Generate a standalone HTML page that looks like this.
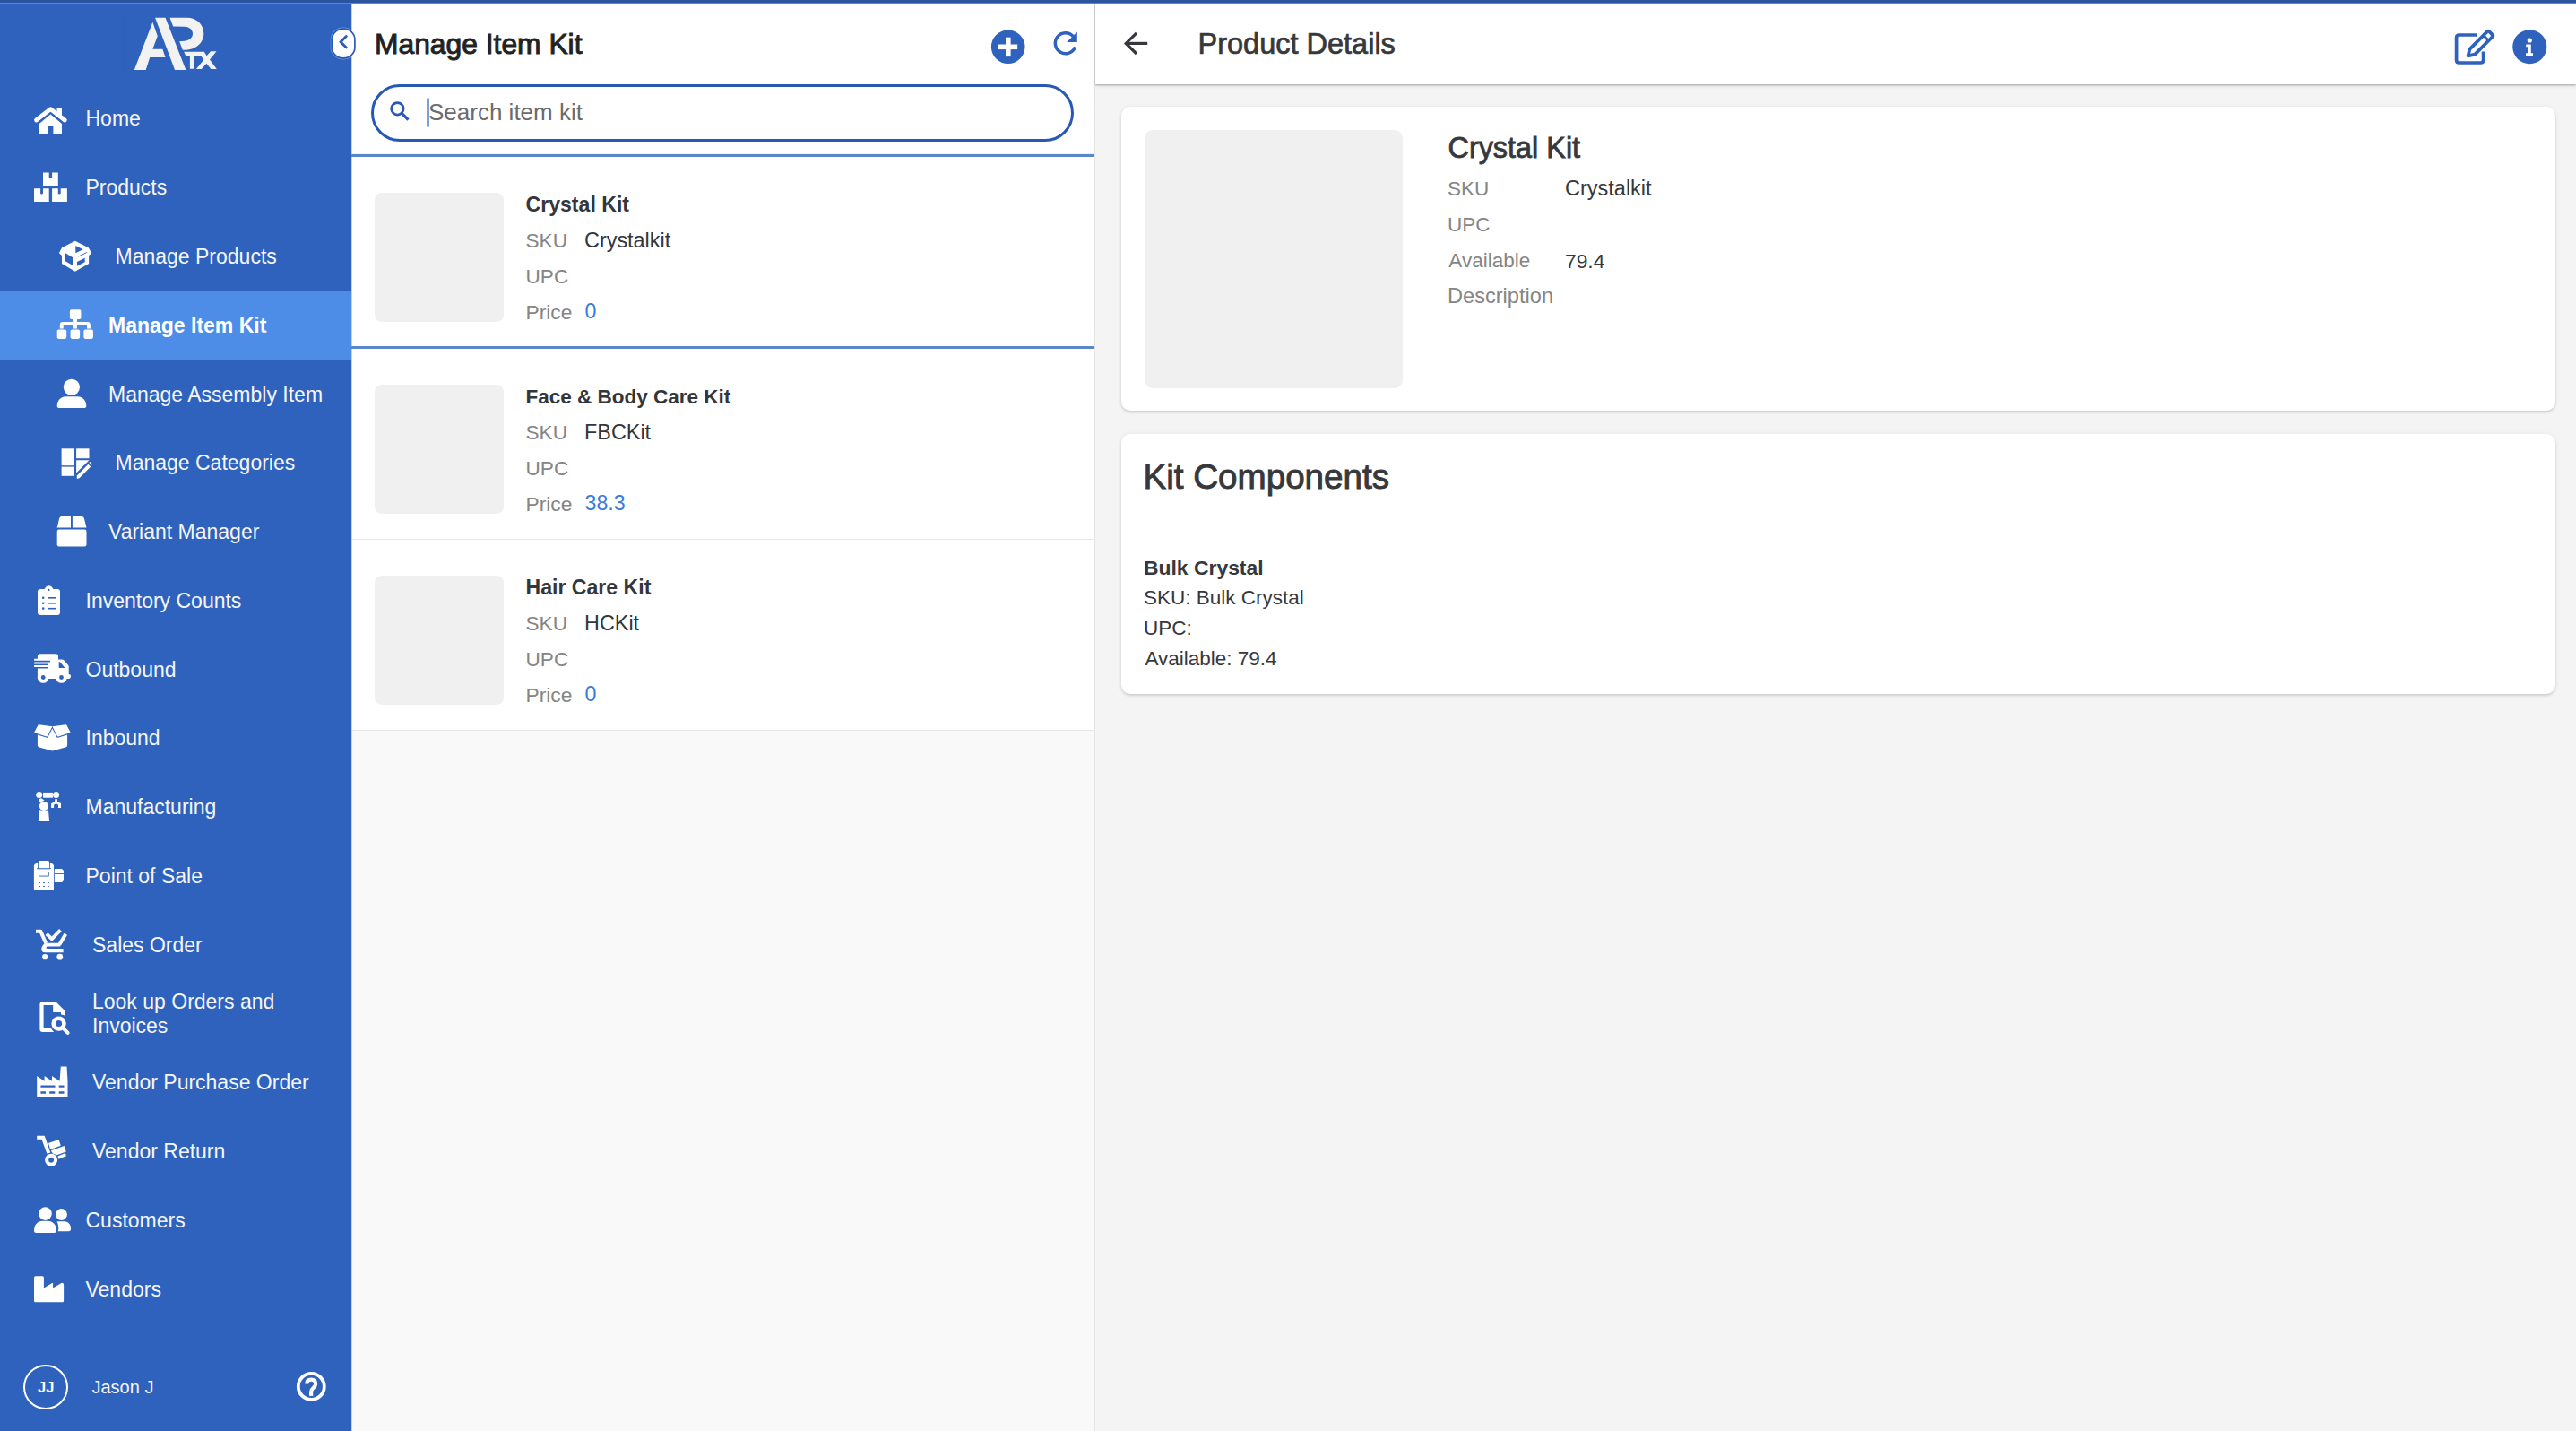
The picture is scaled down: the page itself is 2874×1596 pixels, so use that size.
<!DOCTYPE html>
<html><head><meta charset="utf-8">
<style>
html,body{margin:0;padding:0;width:2874px;height:1596px;overflow:hidden;background:#f4f4f4;}
body{position:relative;font-family:"Liberation Sans",sans-serif;}
.t{position:absolute;white-space:nowrap;}
</style></head><body>
<div style="position:absolute;left:392px;top:4px;width:830px;height:1592px;background:#f9f9f9;"></div>
<div style="position:absolute;left:392px;top:4px;width:830px;height:168px;background:#ffffff;"></div>
<div style="position:absolute;left:1222px;top:4px;width:1652px;height:1592px;background:#f4f4f4;"></div>
<div style="position:absolute;left:0px;top:0px;width:392px;height:1596px;background:#2f62bd;"></div>
<div style="position:absolute;left:0px;top:324px;width:392px;height:77px;background:#4d8de8;"></div>
<div style="position:absolute;left:1221px;top:4px;width:1px;height:1592px;background:#e5e5e5;"></div>
<div class="t" style="left:95.5px;top:120.6px;font-size:23px;line-height:23px;color:#f5f5f5;font-weight:400;">Home</div>
<div class="t" style="left:95.5px;top:197.5px;font-size:23px;line-height:23px;color:#f5f5f5;font-weight:400;">Products</div>
<div class="t" style="left:128.5px;top:275.0px;font-size:23px;line-height:23px;color:#f5f5f5;font-weight:400;">Manage Products</div>
<div class="t" style="left:121.0px;top:352.1px;font-size:23px;line-height:23px;color:#ffffff;font-weight:700;">Manage Item Kit</div>
<div class="t" style="left:121.0px;top:429.0px;font-size:23px;line-height:23px;color:#f5f5f5;font-weight:400;">Manage Assembly Item</div>
<div class="t" style="left:128.5px;top:504.8px;font-size:23px;line-height:23px;color:#f5f5f5;font-weight:400;">Manage Categories</div>
<div class="t" style="left:121.0px;top:581.6px;font-size:23px;line-height:23px;color:#f5f5f5;font-weight:400;">Variant Manager</div>
<div class="t" style="left:95.5px;top:659.1px;font-size:23px;line-height:23px;color:#f5f5f5;font-weight:400;">Inventory Counts</div>
<div class="t" style="left:95.5px;top:736.2px;font-size:23px;line-height:23px;color:#f5f5f5;font-weight:400;">Outbound</div>
<div class="t" style="left:95.5px;top:812.1px;font-size:23px;line-height:23px;color:#f5f5f5;font-weight:400;">Inbound</div>
<div class="t" style="left:95.5px;top:888.9px;font-size:23px;line-height:23px;color:#f5f5f5;font-weight:400;">Manufacturing</div>
<div class="t" style="left:95.5px;top:965.8px;font-size:23px;line-height:23px;color:#f5f5f5;font-weight:400;">Point of Sale</div>
<div class="t" style="left:103.0px;top:1042.6px;font-size:23px;line-height:23px;color:#f5f5f5;font-weight:400;">Sales Order</div>
<div class="t" style="left:103.0px;top:1106.1px;font-size:23px;line-height:23px;color:#f5f5f5;font-weight:400;">Look up Orders and</div>
<div class="t" style="left:103.0px;top:1133.4px;font-size:23px;line-height:23px;color:#f5f5f5;font-weight:400;">Invoices</div>
<div class="t" style="left:103.0px;top:1196.2px;font-size:23px;line-height:23px;color:#f5f5f5;font-weight:400;">Vendor Purchase Order</div>
<div class="t" style="left:103.0px;top:1273.1px;font-size:23px;line-height:23px;color:#f5f5f5;font-weight:400;">Vendor Return</div>
<div class="t" style="left:95.5px;top:1349.9px;font-size:23px;line-height:23px;color:#f5f5f5;font-weight:400;">Customers</div>
<div class="t" style="left:95.5px;top:1426.7px;font-size:23px;line-height:23px;color:#f5f5f5;font-weight:400;">Vendors</div>
<div style="position:absolute;left:26px;top:1521.5px;width:50px;height:50px;box-sizing:border-box;border:2.8px solid #fff;border-radius:50%"></div>
<div class="t" style="left:36.3px;top:1538.9px;font-size:16.5px;line-height:16.5px;color:#fff;font-weight:700;width:30px;text-align:center;">JJ</div>
<div class="t" style="left:102.5px;top:1537.4px;font-size:20px;line-height:20px;color:#f5f5f5;font-weight:400;">Jason J</div>
<div class="t" style="left:418.0px;top:34.1px;font-size:31.8px;line-height:31.8px;color:#222222;font-weight:400;-webkit-text-stroke:0.95px #222222;">Manage Item Kit</div>
<div style="position:absolute;left:414px;top:94px;width:784px;height:63.5px;box-sizing:border-box;border:3px solid #2858b6;border-radius:32px;background:#fff"></div>
<div style="position:absolute;left:476px;top:109px;width:3px;height:33px;background:#7ba0d8;border-radius:1.5px;"></div>
<div class="t" style="left:478.0px;top:112.0px;font-size:26px;line-height:26px;color:#6b6b6b;font-weight:400;">Search item kit</div>
<div style="position:absolute;left:392px;top:172px;width:829px;height:3px;background:#5b86cc;"></div>
<div style="position:absolute;left:392px;top:386px;width:829px;height:3px;background:#5b86cc;"></div>
<div style="position:absolute;left:392px;top:175px;width:829px;height:211px;background:#ffffff;"></div>
<div style="position:absolute;left:392px;top:389px;width:829px;height:212px;background:#ffffff;"></div>
<div style="position:absolute;left:392px;top:602px;width:829px;height:212px;background:#ffffff;"></div>
<div style="position:absolute;left:392px;top:601px;width:829px;height:1px;background:#e6e7ea;"></div>
<div style="position:absolute;left:392px;top:814px;width:829px;height:1px;background:#e6e7ea;"></div>
<div style="position:absolute;left:392px;top:171px;width:829px;height:1px;background:#f0f1f2;"></div>
<div style="position:absolute;left:418px;top:215.4px;width:144px;height:144px;background:#f0f0f0;border-radius:8px;"></div>
<div class="t" style="left:586.5px;top:217.2px;font-size:23.1px;line-height:23.1px;color:#33363b;font-weight:700;">Crystal Kit</div>
<div class="t" style="left:586.5px;top:258.1px;font-size:22.6px;line-height:22.6px;color:#858585;font-weight:400;">SKU</div>
<div class="t" style="left:652.0px;top:257.4px;font-size:23.4px;line-height:23.4px;color:#33363b;font-weight:400;">Crystalkit</div>
<div class="t" style="left:586.5px;top:297.9px;font-size:22.6px;line-height:22.6px;color:#858585;font-weight:400;">UPC</div>
<div class="t" style="left:586.5px;top:336.7px;font-size:22.8px;line-height:22.8px;color:#858585;font-weight:400;">Price</div>
<div class="t" style="left:652.5px;top:336.4px;font-size:23.2px;line-height:23.2px;color:#3a7bdd;font-weight:400;">0</div>
<div style="position:absolute;left:418px;top:429.4px;width:144px;height:144px;background:#f0f0f0;border-radius:8px;"></div>
<div class="t" style="left:586.5px;top:431.7px;font-size:22.5px;line-height:22.5px;color:#33363b;font-weight:700;">Face &amp; Body Care Kit</div>
<div class="t" style="left:586.5px;top:472.1px;font-size:22.6px;line-height:22.6px;color:#858585;font-weight:400;">SKU</div>
<div class="t" style="left:652.0px;top:471.4px;font-size:23.4px;line-height:23.4px;color:#33363b;font-weight:400;">FBCKit</div>
<div class="t" style="left:586.5px;top:511.9px;font-size:22.6px;line-height:22.6px;color:#858585;font-weight:400;">UPC</div>
<div class="t" style="left:586.5px;top:550.7px;font-size:22.8px;line-height:22.8px;color:#858585;font-weight:400;">Price</div>
<div class="t" style="left:652.5px;top:550.4px;font-size:23.2px;line-height:23.2px;color:#3a7bdd;font-weight:400;">38.3</div>
<div style="position:absolute;left:418px;top:642.4px;width:144px;height:144px;background:#f0f0f0;border-radius:8px;"></div>
<div class="t" style="left:586.5px;top:644.2px;font-size:23.1px;line-height:23.1px;color:#33363b;font-weight:700;">Hair Care Kit</div>
<div class="t" style="left:586.5px;top:685.1px;font-size:22.6px;line-height:22.6px;color:#858585;font-weight:400;">SKU</div>
<div class="t" style="left:652.0px;top:684.4px;font-size:23.4px;line-height:23.4px;color:#33363b;font-weight:400;">HCKit</div>
<div class="t" style="left:586.5px;top:724.9px;font-size:22.6px;line-height:22.6px;color:#858585;font-weight:400;">UPC</div>
<div class="t" style="left:586.5px;top:763.7px;font-size:22.8px;line-height:22.8px;color:#858585;font-weight:400;">Price</div>
<div class="t" style="left:652.5px;top:763.4px;font-size:23.2px;line-height:23.2px;color:#3a7bdd;font-weight:400;">0</div>
<div style="position:absolute;left:1222px;top:4px;width:1652px;height:90px;background:#fff;box-shadow:0 1px 2px rgba(0,0,0,0.28),0 2px 5px rgba(0,0,0,0.08)"></div>
<div class="t" style="left:1336.5px;top:33.0px;font-size:32.5px;line-height:32.5px;color:#37383b;font-weight:400;-webkit-text-stroke:0.7px #37383b;">Product Details</div>
<div style="position:absolute;left:1251px;top:119px;width:1600px;height:339px;background:#fff;border-radius:10px;box-shadow:0 2px 3px rgba(0,0,0,0.13),0 0 5px rgba(0,0,0,0.06)"></div>
<div style="position:absolute;left:1251px;top:484px;width:1600px;height:290px;background:#fff;border-radius:10px;box-shadow:0 2px 3px rgba(0,0,0,0.13),0 0 5px rgba(0,0,0,0.06)"></div>
<div style="position:absolute;left:1277px;top:144.5px;width:288px;height:288px;background:#f0f0f0;border-radius:9px;"></div>
<div class="t" style="left:1615.5px;top:149.3px;font-size:32.4px;line-height:32.4px;color:#37383b;font-weight:400;-webkit-text-stroke:0.8px #37383b;">Crystal Kit</div>
<div class="t" style="left:1615.0px;top:200.0px;font-size:22.5px;line-height:22.5px;color:#858585;font-weight:400;">SKU</div>
<div class="t" style="left:1746.0px;top:199.2px;font-size:23.5px;line-height:23.5px;color:#37383b;font-weight:400;">Crystalkit</div>
<div class="t" style="left:1615.0px;top:240.3px;font-size:22.5px;line-height:22.5px;color:#858585;font-weight:400;">UPC</div>
<div class="t" style="left:1616.3px;top:280.2px;font-size:22.5px;line-height:22.5px;color:#858585;font-weight:400;">Available</div>
<div class="t" style="left:1746.0px;top:279.7px;font-size:22.8px;line-height:22.8px;color:#37383b;font-weight:400;">79.4</div>
<div class="t" style="left:1615.0px;top:319.1px;font-size:23.6px;line-height:23.6px;color:#858585;font-weight:400;">Description</div>
<div class="t" style="left:1275.5px;top:513.4px;font-size:38.6px;line-height:38.6px;color:#37383b;font-weight:400;-webkit-text-stroke:0.95px #37383b;">Kit Components</div>
<div class="t" style="left:1276.0px;top:622.4px;font-size:22.9px;line-height:22.9px;color:#37383b;font-weight:700;">Bulk Crystal</div>
<div class="t" style="left:1276.0px;top:655.6px;font-size:22.5px;line-height:22.5px;color:#37383b;font-weight:400;">SKU: Bulk Crystal</div>
<div class="t" style="left:1276.0px;top:689.5px;font-size:22.5px;line-height:22.5px;color:#37383b;font-weight:400;">UPC:</div>
<div class="t" style="left:1277.4px;top:723.6px;font-size:22.5px;line-height:22.5px;color:#37383b;font-weight:400;">Available: 79.4</div>
<div style="position:absolute;left:392px;top:4px;width:1px;height:1592px;background:#c2d1ec;"></div>
<div style="position:absolute;left:392px;top:172px;width:1px;height:3px;background:#5b86cc;"></div>
<div style="position:absolute;left:392px;top:386px;width:1px;height:3px;background:#5b86cc;"></div>
<div style="position:absolute;left:0px;top:0px;width:2874px;height:3px;background:#2a559f;"></div>
<div style="position:absolute;left:0px;top:3px;width:2874px;height:1px;background:#5f86c2;"></div>
<svg style="position:absolute;left:0;top:0" width="392" height="1596" viewBox="0 0 392 1596">
<rect x="138.5" y="16.5" width="1" height="64" fill="#2c5db5"/>
<g fill="#f2f2f2">
 <polygon points="149.8,77.9 170.3,24.8 175.8,40.2 170.3,54.7 181.4,54.7 184.5,64.0 167.2,64.0 162.7,77.9"/>
 <polygon points="173.1,19.8 184.5,19.8 207.4,77.9 195.1,77.9"/>
 <path d="M189.5,19.8 L208.3,19.8 C219.5,19.8 227.3,27.5 227.3,37.4 C227.3,47.8 218.5,55.8 204.9,55.8 L203.8,55.8 L200.2,46.3 L205.5,45.8 C211,45.8 215,42.2 215,37.6 C215,33 211,29.8 205.5,29.8 L193.2,29.6 Z"/>
 <polygon points="205.2,57.8 227.8,57.8 230.6,62.3 235.1,57.2 241.5,57.2 234.0,66.5 241.8,77.1 235.4,77.1 230.4,70.7 224.8,77.1 218.9,77.1 227.3,66.8 224.5,62.8 216.9,62.8 216.9,76.8 211.9,76.8 211.9,62.8 207.4,62.8"/>
</g>
<g fill="#fff" stroke="none">
 <!-- home -->
 <polyline points="40.5,134 56.4,121.6 72.3,134" fill="none" stroke="#fff" stroke-width="4.8" stroke-linecap="round" stroke-linejoin="round"/>
 <rect x="63.5" y="120.5" width="5.5" height="9"/>
 <polygon points="43.8,138 56.4,127.5 69,138 69,149 59.4,149 59.4,141 53.9,141 53.9,149 43.8,149"/>
 <!-- products: boxes stacked -->
 <path d="M48,192.6h6.7v5.4l1.7,1.2l1.7,-1.2v-5.4h6.7v14.3h-16.8z"/>
 <path d="M38,210.2h7.1v5.5l1.45,1l1.45,-1v-5.5h6.7v14.7h-16.7z"/>
 <path d="M58.1,210.2h6.7v5.5l1.45,1l1.45,-1v-5.5h7.2v14.7h-16.8z"/>
 <!-- manage products: box -->
 <path fill-rule="evenodd" d="M83.8,268.7 L98.7,276.2 L102.2,282.3 L99.1,284.9 L99.1,294.1 L83.8,302.8 L69,294.1 L69,284.9 L65.9,282.3 L69,276.2 Z M73,282.3 L81.7,287.5 L81.7,296.2 L73,291.2 Z M86,292 L94.7,287.7 L94.7,292.3 L86,296.7 Z M84.3,274 L92.6,278.3 L84.3,282.3 Z M87.3,285.8 L97,281 L97.3,281.8 L87.6,286.6 Z"/>
 <!-- sitemap -->
 <rect x="77.9" y="345.2" width="12.5" height="10.9" rx="1.8"/>
 <rect x="82.1" y="355" width="3.9" height="11.5"/>
 <path d="M66.8,366.5 V362.5 Q66.8,359.1 70.2,359.1 H97.5 Q100.9,359.1 100.9,362.5 V366.5 H97 V363.1 H70.7 V366.5 Z"/>
 <rect x="63.7" y="367.4" width="10.5" height="10.5" rx="1.8"/>
 <rect x="78.6" y="367.4" width="10.5" height="10.5" rx="1.8"/>
 <rect x="93.4" y="367.4" width="10.5" height="10.5" rx="1.8"/>
 <!-- user -->
 <circle cx="79.9" cy="431.8" r="9.1"/>
 <path d="M63.7,452.9 C63.7,446.5 68,442.3 73.5,442.3 H86.5 C92,442.3 96.3,446.5 96.3,452.9 Q96.3,454.9 94.3,454.9 H65.7 Q63.7,454.9 63.7,452.9 Z"/>
 <!-- categories -->
 <rect x="68.6" y="500.3" width="14.4" height="18.9"/>
 <rect x="68.6" y="520.6" width="14.4" height="10.2"/>
 <rect x="85.1" y="500.3" width="14.4" height="10.9"/>
 <polygon points="85.1,513.3 99.5,513.3 85.1,527.5"/>
 <polygon points="85.8,530.5 98.5,517.8 101.2,520.5 88.5,533.2 85.8,533.9"/>
 <polygon points="99.5,516 100.4,515.1 103,517.7 102.1,518.6"/>
 <!-- box (variant) -->
 <path d="M69.5,575.8 H79 V588.4 H63.7 L66,579 Q66.8,575.8 69.5,575.8 Z"/>
 <path d="M80.9,575.8 H90.5 Q93.3,575.8 94.1,579 L96.5,588.4 H80.9 Z"/>
 <rect x="63.7" y="590.5" width="32.8" height="18.9" rx="2.2"/>
 <!-- clipboard list -->
 <path fill-rule="evenodd" d="M45,657.1 H49.6 Q51.3,653.2 54.5,653.2 Q57.7,653.2 59.4,657.1 H64 Q67,657.1 67,660.1 V683 Q67,686 64,686 H45 Q42,686 42,683 V660.1 Q42,657.1 45,657.1 Z M54.5,656.8 A1.1,1.1 0 1 0 54.5,659 A1.1,1.1 0 1 0 54.5,656.8 Z"/>
 <g fill="#2f62bd">
  <circle cx="48.2" cy="666.7" r="1.3"/><circle cx="48.2" cy="672.7" r="1.3"/><circle cx="48.2" cy="678.6" r="1.3"/>
  <rect x="53.1" y="666" width="9.1" height="1.6"/><rect x="53.1" y="672" width="9.1" height="1.6"/><rect x="53.1" y="677.9" width="9.1" height="1.6"/>
 </g>
 <!-- truck fast -->
 <path fill-rule="evenodd" d="M44.5,729.3 H62.5 Q65,729.3 65,731.8 V735.5 H69 Q70.5,735.5 71.5,736.6 L76.2,742 Q76.7,742.6 76.7,743.5 V752 Q79,752 79,754 Q79,756.9 76.5,756.9 H41.9 V745.6 H53 V744 H38.1 V742 H54 V740.4 H38.1 V738.4 H55.9 V736.8 H38.1 V734.8 H41.9 V731.8 Q41.9,729.3 44.5,729.3 Z M65.7,738.2 V745 H72.5 L67,738.2 Z"/>
 <circle cx="48.2" cy="755.5" r="6.3"/><circle cx="68.5" cy="755.5" r="6.3"/>
 <circle cx="48.2" cy="755.5" r="2.4" fill="#2f62bd"/><circle cx="68.5" cy="755.5" r="2.4" fill="#2f62bd"/>
 <!-- box open -->
 <path d="M41.9,819.6 L52.2,822.7 Q53,822.9 53.4,822.2 L58.4,812.4 L63.4,822.2 Q63.8,822.9 64.6,822.7 L75.1,819.6 V831 Q75.1,833 73,833.6 L58.4,837.4 L43.8,833.6 Q41.9,833 41.9,831 Z"/>
 <path d="M42.6,808.6 Q43,808.1 43.6,808.2 L58.4,810.3 L52.9,820.9 Q52.5,821.6 51.8,821.4 L38.9,817.3 Q38.1,817 38.5,816.3 Z"/>
 <path d="M74.2,808.6 Q73.8,808.1 73.2,808.2 L58.4,810.3 L63.9,820.9 Q64.3,821.6 65,821.4 L77.9,817.3 Q78.7,817 78.3,816.3 Z"/>
 <!-- manufacturing robot -->
 <circle cx="43.7" cy="886.6" r="3.5"/><circle cx="62.6" cy="886.6" r="3.5"/>
 <rect x="48" y="883.9" width="10.9" height="5.8"/>
 <polygon points="42.9,891.6 45.9,890.3 49.6,892.4 44.9,895"/>
 <circle cx="48.9" cy="899.1" r="5"/>
 <path d="M44.1,903 Q48.9,905.5 53.9,903 L55.1,915.9 H42.9 Z"/>
 <path d="M61.2,891.2 H63.9 V894 L68,895.9 V900.9 H65 V897.4 L62.6,896.3 L60.1,897.4 V900.9 H57.1 V896.2 L61.2,894 Z"/>
 <!-- point of sale -->
 <path d="M40,963 H58 L60,965 V993 H37.9 V965 Z"/>
 <g fill="#2f62bd">
  <rect x="42.1" y="962.4" width="13.7" height="6.8"/>
  <rect x="41.1" y="968.2" width="15.7" height="0.9"/>
 </g>
 <path d="M43.9,960 H54 L55,961 V968.2 H42.9 V961 Z"/>
 <rect x="43.45" y="972.55" width="10.8" height="4.5" fill="#fff" stroke="#2f62bd" stroke-width="0.9"/>
 <g fill="#2f62bd">
  <rect x="43" y="981.1" width="2" height="0.9"/><rect x="48" y="981.1" width="2" height="0.9"/><rect x="52.9" y="981.1" width="2" height="0.9"/>
  <rect x="43" y="984.1" width="2" height="0.9"/><rect x="48" y="984.1" width="2" height="0.9"/><rect x="52.9" y="984.1" width="2" height="0.9"/>
  <rect x="43" y="988" width="2" height="0.9"/><rect x="48" y="988" width="2" height="0.9"/><rect x="52.9" y="988" width="2" height="0.9"/>
 </g>
 <path d="M60.8,969 H69 L71,971 V982 L69,984 H60.8 Z"/>
 <rect x="60.8" y="974.1" width="10.2" height="0.9" fill="#2f62bd"/>
 <!-- sales order cart -->
 <polyline points="40,1038.8 45.4,1038.8 51.2,1052" fill="none" stroke="#fff" stroke-width="4" stroke-linejoin="round"/>
 <polyline points="73.3,1041.8 66.6,1053" fill="none" stroke="#fff" stroke-width="4"/>
 <path d="M50.5,1051.7 H66.2 Q68,1051.7 67.8,1053.6 L67.3,1055.5 H52.3 L51.7,1056.6 Q51.3,1058.1 52.8,1058.1 H70.6 V1062.2 H50.2 Q46.2,1062.2 46.3,1058.3 Q46.5,1055.5 48.5,1053.3 Z"/>
 <polyline points="52,1041.6 57.8,1047.2 67.4,1037.4" fill="none" stroke="#fff" stroke-width="3.9"/>
 <circle cx="50.2" cy="1067.2" r="3.1"/><circle cx="66.8" cy="1067.2" r="3.4"/>
 <!-- lookup file search -->
 <path d="M44.4,1120.5 Q44.4,1117.2 47.7,1117.2 H62.3 L72.1,1127.1 V1132.4 L68.3,1131.5 L67.7,1129.1 H59.2 V1121.1 H48.6 V1146.9 H57 L60.1,1151 H47.7 Q44.4,1151 44.4,1147.7 Z"/>
 <circle cx="65.6" cy="1141.6" r="5.85" fill="none" stroke="#fff" stroke-width="4.7"/>
 <line x1="70.3" y1="1146.6" x2="75.6" y2="1151.9" stroke="#fff" stroke-width="4.1" stroke-linecap="round"/>
 <!-- factory (vendor PO) -->
 <path fill-rule="evenodd" d="M41.2,1200.1 L49.6,1205.7 V1200.1 L58,1205.7 V1200.1 L66.6,1205.7 L67.8,1189.6 H74.5 L75.5,1205.7 V1223.9 H41.2 Z M45.4,1210.5 V1212.8 H61.5 V1210.5 Z M65.7,1210.5 V1212.8 H71.5 V1210.5 Z M45.4,1217.3 V1219.7 H51 V1217.3 Z M55.2,1217.3 V1219.7 H61.3 V1217.3 Z M65.7,1217.3 V1219.7 H71.5 V1217.3 Z"/>
 <!-- dolly -->
 <path d="M41.2,1266.8 H49.7 L56.2,1285.5 L52.4,1286.7 L46.5,1270.8 H41.2 Z"/>
 <circle cx="57.1" cy="1293.7" r="7"/>
 <circle cx="57.1" cy="1293.7" r="2.9" fill="#2f62bd"/>
 <polygon points="54,1274.9 65.6,1271 67.8,1277.8 56.2,1282"/>
 <polygon points="56.8,1283.2 71.7,1277.9 73.8,1284.4 63.4,1288.2 58.8,1286.6"/>
 <polygon points="64.4,1289.4 72.9,1286 73.9,1289.3 65.4,1292.7"/>
 <!-- users -->
 <circle cx="50.5" cy="1353.6" r="7.3"/>
 <path d="M38,1372.5 C38,1366 42,1361.8 47.5,1361.8 H53.4 C58.9,1361.8 62.9,1366 62.9,1372.5 Q62.9,1375 60.4,1375 H40.5 Q38,1375 38,1372.5 Z"/>
 <circle cx="68.5" cy="1354.5" r="6.4"/>
 <path d="M63.5,1362.3 H71.5 C76,1362.3 79.1,1365.5 79.1,1370.5 Q79.1,1373.2 76.4,1373.2 H64.6 Q65.3,1372 65.3,1370.5 C65.3,1367 64.6,1364.2 63.5,1362.3 Z"/>
 <!-- industry vendors -->
 <path d="M39.5,1423.2 H47.4 Q48.9,1423.2 48.9,1424.7 V1436.4 L58.2,1430.9 Q59.1,1430.5 59.1,1431.5 V1436.4 L68.5,1430.9 Q70,1430.2 70.6,1431.5 Q71.1,1432.3 71.1,1433 V1450.8 Q71.1,1452.3 69.6,1452.3 H39.5 Q38,1452.3 38,1450.8 V1424.7 Q38,1423.2 39.5,1423.2 Z"/>
 <!-- help -->
 <circle cx="347.3" cy="1546.4" r="14.5" fill="none" stroke="#fff" stroke-width="3.8"/>
 <path d="M342.2,1543.6 Q342.2,1538.6 347.2,1538.6 Q352.1,1538.6 352.1,1543.2 Q352.1,1545.9 349.6,1547.8 Q347.1,1549.8 347.1,1552.3" fill="none" stroke="#fff" stroke-width="4.1"/>
 <rect x="345" y="1552.6" width="4.2" height="4.3"/>
</g>
</svg>
<svg style="position:absolute;left:0;top:0" width="2874" height="200" viewBox="0 0 2874 200">
 <rect x="369.2" y="30.9" width="27.8" height="35.2" rx="13.9" ry="12.8" fill="none" stroke="rgba(255,255,255,0.35)" stroke-width="1"/>
 <rect x="370.3" y="32.2" width="25.6" height="32.6" rx="12.8" ry="11.8" fill="#fff" stroke="#2a5bb8" stroke-width="1.7"/>
 <polyline points="386.3,40.6 380.1,46.8 386.3,53" fill="none" stroke="#2a5bb8" stroke-width="2.8" stroke-linejoin="miter" stroke-linecap="round"/>
 <circle cx="1124.7" cy="52.3" r="18.8" fill="#2f62bd"/>
 <rect x="1122" y="41.7" width="5.6" height="21.4" fill="#fff"/>
 <rect x="1114" y="49.5" width="21.2" height="5.6" fill="#fff"/>
 <path d="M1197.2,40.5 A11.45,11.45 0 1 0 1199.5,52.3" fill="none" stroke="#2f62bd" stroke-width="3.5"/>
 <polygon points="1201.8,35.4 1201.8,47 1190.2,47" fill="#2f62bd"/>
 <circle cx="443.4" cy="121.3" r="6.75" fill="none" stroke="#2858b6" stroke-width="2.7"/>
 <line x1="448.5" y1="126.6" x2="455.5" y2="133.6" stroke="#2858b6" stroke-width="3.1"/>
 <polyline points="1268,36.8 1256.2,48.4 1268,60" fill="none" stroke="#37383b" stroke-width="3.2"/>
 <line x1="1256.5" y1="48.4" x2="1280.2" y2="48.4" stroke="#37383b" stroke-width="3.2"/>
 <path d="M2763.5,39 H2743.6 Q2740.6,39 2740.6,42 V67 Q2740.6,70 2743.6,70 H2767.6 Q2770.6,70 2770.6,67 V57.5" fill="none" stroke="#2f62bd" stroke-width="3.7" stroke-linejoin="round"/>
 <path d="M2778.5,36.5 L2780.8,38.8 Q2781.9,39.9 2780.8,41 L2761.2,60.6 L2753.6,62.4 L2755.4,54.8 L2775,35.2 Q2776.1,34.1 2777.2,35.2 Z" fill="none" stroke="#2f62bd" stroke-width="3.8" stroke-linejoin="round"/>
 <line x1="2771" y1="39.8" x2="2776.2" y2="45" stroke="#2f62bd" stroke-width="3"/>
 <circle cx="2822.3" cy="52.3" r="19" fill="#2f62bd"/>
 <circle cx="2822.3" cy="45" r="2.6" fill="#fff"/>
 <path d="M2818.2,49.5 H2823.8 V59.3 H2826 V62 H2818 V59.3 H2820.3 V52.2 H2818.2 Z" fill="#fff"/>
</svg>
</body></html>
